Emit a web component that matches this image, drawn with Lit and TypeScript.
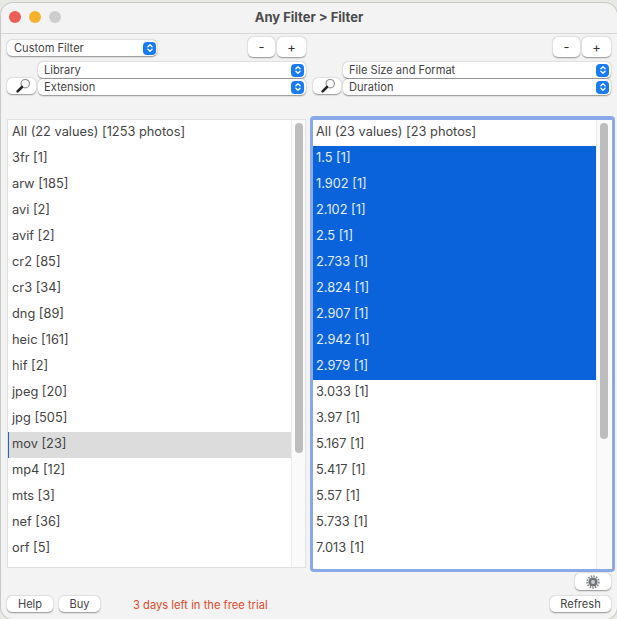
import { css, html, LitElement, svg } from "lit";
import { customElement } from "lit/decorators.js";

const LEFT_ROWS = [
  "All (22 values) [1253 photos]", "3fr [1]", "arw [185]", "avi [2]", "avif [2]", "cr2 [85]",
  "cr3 [34]", "dng [89]", "heic [161]", "hif [2]", "jpeg [20]", "jpg [505]", "mov [23]",
  "mp4 [12]", "mts [3]", "nef [36]", "orf [5]",
];
const RIGHT_ROWS = [
  "All (23 values) [23 photos]", "1.5 [1]", "1.902 [1]", "2.102 [1]", "2.5 [1]", "2.733 [1]",
  "2.824 [1]", "2.907 [1]", "2.942 [1]", "2.979 [1]", "3.033 [1]", "3.97 [1]", "5.167 [1]",
  "5.417 [1]", "5.57 [1]", "5.733 [1]", "7.013 [1]",
];

const chevrons = svg`<svg width="12" height="12" viewBox="0 0 12 12" fill="none" stroke="#fff" stroke-width="1.3" stroke-linecap="round" stroke-linejoin="round"><path d="M3.9 4.7 6 2.7l2.1 2M3.9 7.3 6 9.3l2.1-2"/></svg>`;

const magnifier = svg`<svg width="18" height="16" viewBox="0 0 18 16" fill="none"><circle cx="12.2" cy="5.7" r="4.2" fill="#fbfbfb" stroke="#8a8a8a" stroke-width="1.1"/><path d="M9 9 4.6 13.4" stroke="#262626" stroke-width="2.6" stroke-linecap="round"/></svg>`;

const gear = svg`<svg width="14" height="14" viewBox="0 0 14 14"><circle cx="7" cy="7" r="5.8" fill="none" stroke="#808488" stroke-width="1.8" stroke-dasharray="1.5 1.2"/><circle cx="7" cy="7" r="4.6" fill="#6f7478"/><circle cx="7" cy="7" r="2" fill="#c6ced6"/></svg>`;

@customElement("app-root")
export class AppRoot extends LitElement {
  static styles = css`
    :host {
      display: block;
      width: 617px;
      height: 619px;
      background: #e6e9e4;
      font-family: "Inter", "Liberation Sans", sans-serif;
      color: #444;
      overflow: hidden;
    }

    .window {
      box-sizing: border-box;
      width: 616px;
      height: 616px;
      margin: 3px 0 0 1px;
      background: #f3f3f3;
      border-radius: 12px;
      box-shadow: 0 0 0 1px rgba(0, 0, 0, 0.13);
      display: flex;
      flex-direction: column;
      overflow: hidden;
    }

    .titlebar {
      height: 28px;
      flex: none;
      border-bottom: 1px solid #d6d6d6;
      padding-bottom: 2px;
      box-sizing: content-box;
      margin-bottom: -2px;
      display: flex;
      align-items: center;
      justify-content: center;
      position: relative;
      font-size: 13px;
      font-weight: 700;
      color: #4a4a4a;
    }

    .lights {
      position: absolute;
      left: 8px;
      top: 8px;
      display: flex;
      gap: 8px;
    }

    .lights span {
      width: 12px;
      height: 12px;
      border-radius: 50%;
    }

    .red { background: #ed5f56; }
    .yellow { background: #f4b32e; }
    .grey { background: #cdcdcd; }

    .controls {
      display: grid;
      grid-template-columns: 299px 298px;
      column-gap: 7px;
      padding: 5px 0 0 6px;
      height: 84px;
      flex: none;
      box-sizing: border-box;
    }

    .control-col {
      display: flex;
      flex-direction: column;
    }

    .top-line {
      display: flex;
      justify-content: space-between;
      align-items: flex-start;
      height: 20px;
      margin-bottom: 5px;
    }

    .right-col .top-line {
      justify-content: flex-end;
    }

    .select-line {
      display: flex;
      align-items: flex-end;
      gap: 2px;
    }

    .selects {
      flex: 1;
      display: flex;
      flex-direction: column;
      gap: 1px;
    }

    .popup {
      box-sizing: border-box;
      height: 16px;
      background: #fff;
      border-radius: 5px;
      box-shadow: 0 0.5px 1.5px rgba(0, 0, 0, 0.42);
      display: flex;
      align-items: center;
      justify-content: space-between;
      padding: 0 2px 0 6px;
      font-size: 11.1px;
      color: #444;
    }

    .popup.small {
      width: 150px;
      margin-top: 3px;
      padding: 0 1px 0 7px;
    }

    .stepper {
      width: 13px;
      height: 13px;
      border-radius: 4px;
      background: #1a7cf3;
      display: flex;
      align-items: center;
      justify-content: center;
    }

    .btn {
      box-sizing: border-box;
      background: #fff;
      border-radius: 5px;
      box-shadow: 0 0.5px 1.5px rgba(0, 0, 0, 0.4);
      display: flex;
      align-items: center;
      justify-content: center;
      font-size: 11.1px;
      color: #444;
      height: 16px;
    }

    .plusminus {
      display: flex;
      gap: 2px;
    }

    .plusminus .btn {
      height: 20px;
      font-size: 13px;
      color: #333;
    }

    .plusminus .minus { width: 27px; }
    .plusminus .plus { width: 29px; }

    .search {
      width: 29px;
      height: 16px;
      margin-bottom: 1px;
      flex: none;
    }

    .right-col .search {
      width: 28px;
    }

    .lists {
      display: grid;
      grid-template-columns: 299px 305px;
      column-gap: 4px;
      padding-left: 6px;
      flex: none;
      height: 456px;
    }

    .list-frame {
      display: flex;
      background: #fff;
      box-sizing: border-box;
      overflow: hidden;
    }

    .left-frame {
      margin-top: 3px;
      height: 449px;
      border: 1px solid #e0e0e0;
    }

    .right-frame {
      height: 456px;
      border: 3px solid #8aa9e8;
      border-top-width: 4px;
      border-radius: 4px;
    }

    .rows {
      flex: 1;
      min-width: 0;
      overflow: hidden;
      font-size: 12.8px;
    }

    .row {
      height: 26px;
      line-height: 23px;
      padding-left: 4px;
      white-space: nowrap;
    }

    .right-frame .row {
      padding-left: 3px;
    }

    .row.selected {
      background: #0a63db;
      color: #e3edfb;
    }

    .row.inactive {
      background: #dcdcdc;
      border-left: 1px solid #2a62b0;
      padding-left: 3px;
    }

    .track {
      flex: none;
      width: 14px;
      background: #fafafa;
      border-left: 1px solid #ececec;
      box-sizing: border-box;
      padding: 3px 2px 0 3px;
    }

    .right-frame .track {
      width: 16px;
      padding: 3px 4px 0 3px;
    }

    .thumb {
      background: #bdbdbd;
      border-radius: 5px;
    }

    .gear-line {
      display: flex;
      justify-content: flex-end;
      padding: 1px 6px 0 0;
      height: 17px;
      flex: none;
    }

    .gear-btn {
      width: 36px;
      height: 17px;
    }

    .footer {
      display: flex;
      align-items: center;
      padding: 6px 6px 0 6px;
    }

    .footer .help { width: 46px; }
    .footer .buy { width: 41px; margin-left: 6px; }
    .footer .refresh { width: 61px; }

    .trial {
      flex: 1;
      margin-left: 33px;
      padding-top: 2px;
      font-size: 11.2px;
      color: #dd4a2e;
    }
  `;

  private rowClass(selected: boolean, inactive: boolean) {
    return `row${selected ? " selected" : ""}${inactive ? " inactive" : ""}`;
  }

  render() {
    return html`
      <div class="window">
        <div class="titlebar">
          <div class="lights">
            <span class="red"></span><span class="yellow"></span><span class="grey"></span>
          </div>
          Any Filter &gt; Filter
        </div>

        <div class="controls">
          <div class="control-col">
            <div class="top-line">
              <div class="popup small">Custom Filter <span class="stepper">${chevrons}</span></div>
              <div class="plusminus"><div class="btn minus">-</div><div class="btn plus">+</div></div>
            </div>
            <div class="select-line">
              <div class="btn search">${magnifier}</div>
              <div class="selects">
                <div class="popup">Library <span class="stepper">${chevrons}</span></div>
                <div class="popup">Extension <span class="stepper">${chevrons}</span></div>
              </div>
            </div>
          </div>
          <div class="control-col right-col">
            <div class="top-line">
              <div class="plusminus"><div class="btn minus">-</div><div class="btn plus">+</div></div>
            </div>
            <div class="select-line">
              <div class="btn search">${magnifier}</div>
              <div class="selects">
                <div class="popup">File Size and Format <span class="stepper">${chevrons}</span></div>
                <div class="popup">Duration <span class="stepper">${chevrons}</span></div>
              </div>
            </div>
          </div>
        </div>

        <div class="lists">
          <div class="list-frame left-frame">
            <div class="rows">
              ${LEFT_ROWS.map((r, i) => html`<div class=${this.rowClass(false, i === 12)}>${r}</div>`)}
            </div>
            <div class="track"><div class="thumb" style="height: 330px"></div></div>
          </div>
          <div class="list-frame right-frame">
            <div class="rows">
              ${RIGHT_ROWS.map((r, i) => html`<div class=${this.rowClass(i >= 1 && i <= 9, false)}>${r}</div>`)}
            </div>
            <div class="track"><div class="thumb" style="height: 316px"></div></div>
          </div>
        </div>

        <div class="gear-line"><div class="btn gear-btn">${gear}</div></div>

        <div class="footer">
          <div class="btn help">Help</div>
          <div class="btn buy">Buy</div>
          <div class="trial">3 days left in the free trial</div>
          <div class="btn refresh">Refresh</div>
        </div>
      </div>
    `;
  }
}
